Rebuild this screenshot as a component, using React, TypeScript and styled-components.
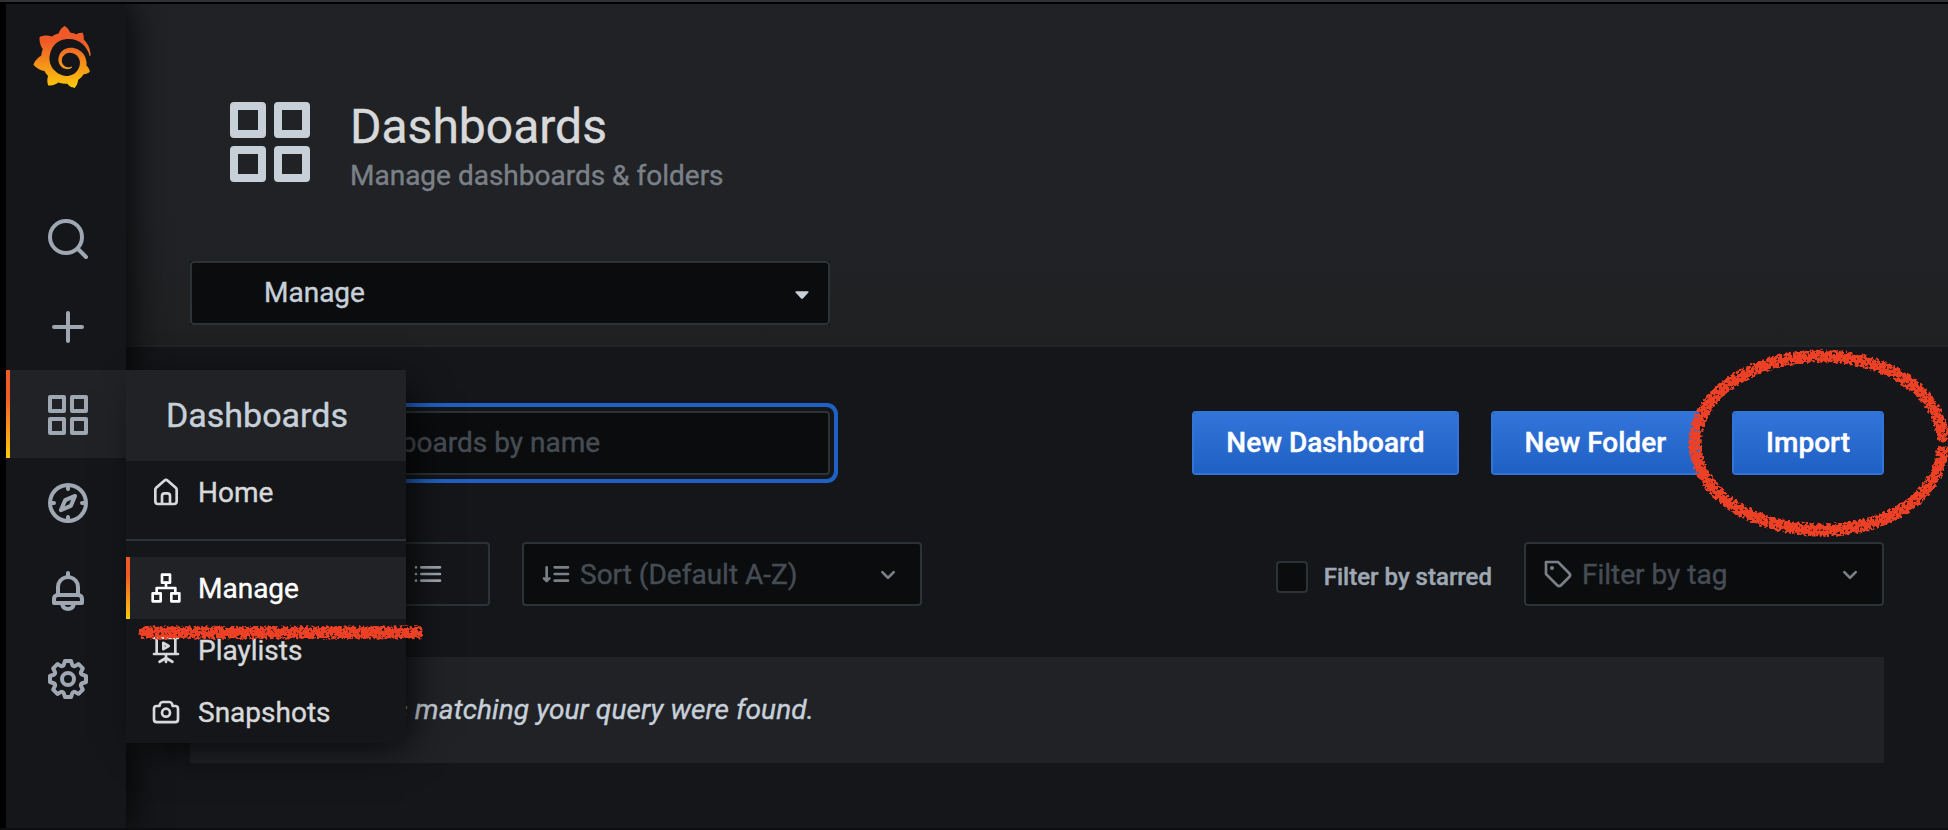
import React from "react";
import styled, { createGlobalStyle, css } from "styled-components";
import { SiGrafana } from "react-icons/si";

const c = {
  bg: "#141619",
  panel: "#202226",
  input: "#0b0c0e",
  border: "#2c3235",
  text: "#c7d0d9",
  strong: "#d8d9da",
  weak: "#7b8087",
  icon: "#9fa7b3",
  placeholder: "#464c54",
  blue: "#3274d9",
  blueDark: "#1f60c4",
  marker: "#ee4024",
};
const brand = "linear-gradient(#f05a28 30%, #fbca0a 99%)";

const Global = createGlobalStyle`
  *, *::before, *::after { box-sizing: border-box; }
  body {
    margin: 0;
    background: #000;
    color: ${c.text};
    font: 400 28px/42px Roboto, "Liberation Sans", sans-serif;
    -webkit-text-stroke: 0.4px currentColor;
    overflow: hidden;
  }
  h1, p { margin: 0; font-weight: 400; }
`;

/* ---------- icons ---------- */

const Glyph = styled.svg<{ $size: number }>`
  display: block;
  flex: none;
  width: ${(p) => p.$size}px;
  height: ${(p) => p.$size}px;
  fill: currentColor;
  g {
    fill: none;
    stroke: currentColor;
    stroke-width: 2;
    stroke-linecap: round;
    stroke-linejoin: round;
  }
`;

const shapes = {
  search: (
    <g>
      <circle cx="11" cy="11" r="8" />
      <path d="M17 17l4 4" />
    </g>
  ),
  plus: (
    <g>
      <path d="M12 5v14M5 12h14" />
    </g>
  ),
  apps: (
    <g>
      <rect x="3" y="3" width="7" height="7" />
      <rect x="14" y="3" width="7" height="7" />
      <rect x="3" y="14" width="7" height="7" />
      <rect x="14" y="14" width="7" height="7" />
    </g>
  ),
  compass: (
    <path d="M12,2A10,10,0,1,0,22,12,10,10,0,0,0,12,2Zm1,17.93V19a1,1,0,0,0-2,0v.93A8,8,0,0,1,4.07,13H5a1,1,0,0,0,0-2H4.07A8,8,0,0,1,11,4.07V5a1,1,0,0,0,2,0V4.07A8,8,0,0,1,19.93,11H19a1,1,0,0,0,0,2h.93A8,8,0,0,1,13,19.93ZM15.14,7.55l-5,2.12a1,1,0,0,0-.52.52l-2.12,5a1,1,0,0,0,.21,1.1,1,1,0,0,0,.7.29.93.93,0,0,0,.4-.08l5-2.12a1,1,0,0,0,.52-.52l2.12-5a1,1,0,0,0-1.31-1.31Zm-2.49,5.1-2.28,1,1-2.28,2.28-1Z" />
  ),
  bell: (
    <path d="M18,13.18V10a6,6,0,0,0-5-5.91V3a1,1,0,0,0-2,0V4.09A6,6,0,0,0,6,10v3.18A3,3,0,0,0,4,16v2a1,1,0,0,0,1,1H8.14a4,4,0,0,0,7.72,0H19a1,1,0,0,0,1-1V16A3,3,0,0,0,18,13.18ZM8,10a4,4,0,0,1,8,0v3H8Zm4,10a2,2,0,0,1-1.72-1h3.44A2,2,0,0,1,12,20Zm6-3H6V16a1,1,0,0,1,1-1H17a1,1,0,0,1,1,1Z" />
  ),
  cog: (
    <path d="M21.32,9.55l-1.89-.63.89-1.78A1,1,0,0,0,20.13,6L18,3.87a1,1,0,0,0-1.15-.19l-1.78.89-.63-1.89A1,1,0,0,0,13.5,2h-3a1,1,0,0,0-.95.68L8.92,4.57,7.14,3.68A1,1,0,0,0,6,3.87L3.87,6a1,1,0,0,0-.19,1.15l.89,1.78-1.89.63A1,1,0,0,0,2,10.5v3a1,1,0,0,0,.68.95l1.89.63-.89,1.78A1,1,0,0,0,3.87,18L6,20.13a1,1,0,0,0,1.15.19l1.78-.89.63,1.89a1,1,0,0,0,.95.68h3a1,1,0,0,0,.95-.68l.63-1.89,1.78.89A1,1,0,0,0,18,20.13L20.13,18a1,1,0,0,0,.19-1.15l-.89-1.78,1.89-.63A1,1,0,0,0,22,13.5v-3A1,1,0,0,0,21.32,9.55ZM20,12.78l-1.2.4A2,2,0,0,0,17.64,16l.57,1.14-1.1,1.1L16,17.64a2,2,0,0,0-2.79,1.16l-.4,1.2H11.22l-.4-1.2A2,2,0,0,0,8,17.64l-1.14.57-1.1-1.1L6.36,16A2,2,0,0,0,5.2,13.18L4,12.78V11.22l1.2-.4A2,2,0,0,0,6.36,8L5.79,6.89l1.1-1.1L8,6.36A2,2,0,0,0,10.82,5.2l.4-1.2h1.56l.4,1.2A2,2,0,0,0,16,6.36l1.14-.57,1.1,1.1L17.64,8a2,2,0,0,0,1.16,2.79l1.2.4ZM12,8a4,4,0,1,0,4,4A4,4,0,0,0,12,8Zm0,6a2,2,0,1,1,2-2A2,2,0,0,1,12,14Z" />
  ),
  home: (
    <path d="M20,8h0L14,2.74a3,3,0,0,0-4,0L4,8a3,3,0,0,0-1,2.26V19a3,3,0,0,0,3,3H18a3,3,0,0,0,3-3V10.25A3,3,0,0,0,20,8ZM14,20H10V15a1,1,0,0,1,1-1h2a1,1,0,0,1,1,1Zm5-1a1,1,0,0,1-1,1H16V15a3,3,0,0,0-3-3H11a3,3,0,0,0-3,3v5H6a1,1,0,0,1-1-1V10.25a1,1,0,0,1,.34-.75l6-5.25a1,1,0,0,1,1.32,0l6,5.25a1,1,0,0,1,.34.75Z" />
  ),
  sitemap: (
    <g>
      <rect x="9" y="2" width="6" height="6" />
      <rect x="2" y="16" width="6" height="6" />
      <rect x="16" y="16" width="6" height="6" />
      <path d="M12 8v4M5 16v-4h14v4" />
    </g>
  ),
  presentation: (
    <g>
      <path d="M3 3h18M5 3v12M19 3v12M3 15h18M12 15v6M12 18l-4.8 2.8M12 18l4.8 2.8" />
      <path d="M10 6.6v4.8L14 9z" />
    </g>
  ),
  camera: (
    <path d="M19,6.5H17.72l-.32-1a3,3,0,0,0-2.84-2H9.44A3,3,0,0,0,6.6,5.55l-.32,1H5a3,3,0,0,0-3,3v8a3,3,0,0,0,3,3H19a3,3,0,0,0,3-3v-8A3,3,0,0,0,19,6.5Zm1,11a1,1,0,0,1-1,1H5a1,1,0,0,1-1-1v-8a1,1,0,0,1,1-1H7a1,1,0,0,0,1-.68l.54-1.64a1,1,0,0,1,.95-.68h5.12a1,1,0,0,1,.95.68l.54,1.64A1,1,0,0,0,17,8.5h2a1,1,0,0,1,1,1Zm-8-9a4,4,0,1,0,4,4A4,4,0,0,0,12,8.5Zm0,6a2,2,0,1,1,2-2A2,2,0,0,1,12,14.5Z" />
  ),
  list: (
    <g>
      <path d="M3 7h.01M3 12h.01M3 17h.01M7 7h14M7 12h14M7 17h14" />
    </g>
  ),
  sort: (
    <g>
      <path d="M5 7v10M3 15.3l2 1.9 2-1.9M11 7h10M11 12h10M11 17h10" />
    </g>
  ),
  tag: (
    <path d="M7.5,6A1.5,1.5,0,1,0,9,7.5,1.5,1.5,0,0,0,7.5,6Zm13.62,4.71L12.71,2.29A1,1,0,0,0,12,2H3A1,1,0,0,0,2,3v9a1,1,0,0,0,.29.71l8.42,8.41a3,3,0,0,0,4.24,0L21.12,15a3,3,0,0,0,0-4.24Zm-1.41,2.82h0l-6.18,6.17a1,1,0,0,1-1.41,0L4,11.59V4h7.59l8.12,8.12a1,1,0,0,1,.29.71A1,1,0,0,1,19.71,13.53Z" />
  ),
  angleDown: (
    <path d="M17,9.17a1,1,0,0,0-1.41,0L12,12.71,8.46,9.17a1,1,0,0,0-1.41,0,1,1,0,0,0,0,1.42l4.24,4.24a1,1,0,0,0,1.42,0L17,10.59A1,1,0,0,0,17,9.17Z" />
  ),
  caret: <path d="M7.6 10.7h8.8c.6 0 .8.6.4 1l-4.1 4.4c-.4.4-1 .4-1.4 0l-4.1-4.4c-.4-.4-.2-1 .4-1z" />,
};

type IconName = keyof typeof shapes;

const Icon = ({ name, size = 32 }: { name: IconName; size?: number }) => (
  <Glyph $size={size} viewBox="0 0 24 24" aria-hidden="true">
    {shapes[name]}
  </Glyph>
);

/* ---------- shell ---------- */

const Window = styled.div`
  position: relative;
  display: flex;
  flex-direction: column;
  width: 1948px;
  height: 830px;
  overflow: hidden;
  border-top: 2px solid #313235;
  border-bottom: 2px solid #0c0d0f;
  background: #000;
`;

const Body = styled.div`
  display: flex;
  flex: 1;
  padding: 2px 0 0 6px;
`;

const Sidebar = styled.nav`
  position: relative;
  z-index: 2;
  display: flex;
  flex-direction: column;
  flex: none;
  width: 120px;
  background: ${c.bg};
  box-shadow: 0 0 40px #000;
`;

const Brand = styled.a`
  display: flex;
  height: 190px;
  padding: 22px 0 0 25px;
`;

const Logo = styled(SiGrafana)`
  width: 62px;
  height: 62px;
`;

const NavItem = styled.div<{ $active?: boolean }>`
  position: relative;
  display: flex;
  align-items: center;
  justify-content: center;
  height: 88px;
  padding: 2px 0 0 4px;
  color: ${c.icon};
  ${(p) =>
    p.$active &&
    css`
      background: ${brand} left / 4px 100% no-repeat, ${c.panel};
    `}
`;

const Flyout = styled.div`
  position: absolute;
  top: 0;
  left: 120px;
  width: 280px;
  background: ${c.bg};
  box-shadow: 10px 10px 40px -10px #000;
`;

const FlyoutTitle = styled.div`
  height: 91px;
  padding-left: 40px;
  background: ${c.panel};
  color: ${c.text};
  font-size: 34px;
  line-height: 91px;
`;

const FlyoutRow = styled.a<{ $active?: boolean }>`
  display: flex;
  align-items: center;
  gap: 16px;
  height: 62px;
  padding-left: 24px;
  color: ${c.strong};
  ${(p) =>
    p.$active &&
    css`
      background: ${brand} left / 4px 100% no-repeat, ${c.panel};
      color: #fff;
    `}
`;

const FlyoutLabel = styled.span`
  padding-top: 2px;
`;

const Divider = styled.div`
  height: 2px;
  margin: 16px 0;
  background: ${c.border};
`;

/* ---------- main column ---------- */

const Main = styled.main`
  flex: 1;
  min-width: 0;
  background: ${c.bg};
`;

const PageHeader = styled.header`
  height: 343px;
  padding: 90px 64px 0;
  border-bottom: 2px solid #222427;
  background: linear-gradient(#202226 60%, #1f2021);
`;

const TitleRow = styled.div`
  display: flex;
  height: 167px;
  padding-left: 32px;
  color: ${c.text};
`;

const TitleText = styled.div`
  padding: 5px 0 0 32px;
`;

const Title = styled.h1`
  color: ${c.strong};
  font-size: 48px;
  line-height: 56px;
`;

const Subtitle = styled.p`
  color: ${c.weak};
`;

const boxed = css`
  display: flex;
  align-items: center;
  height: 64px;
  border: 2px solid ${c.border};
  border-radius: 4px;
`;

const PageSelectFrame = styled.div`
  width: 640px;
  background: ${c.input};
`;

const PageSelect = styled.div`
  ${boxed}
  justify-content: space-between;
  padding: 0 10px 0 72px;
  background: ${c.input};
`;

const Content = styled.section`
  padding: 64px 64px 0;
`;

const ActionRow = styled.div`
  display: flex;
  gap: 32px;
`;

const SearchInput = styled.div`
  ${boxed}
  width: 640px;
  margin-right: auto;
  padding-left: 14px;
  gap: 9px;
  background: ${c.input};
  color: ${c.placeholder};
  box-shadow: 0 0 0 4px ${c.bg}, 0 0 0 8px ${c.blueDark};
`;

const Button = styled.button`
  height: 64px;
  padding: 0 32px;
  border: 2px solid ${c.blue};
  border-radius: 4px;
  background: linear-gradient(${c.blue}, ${c.blueDark}) padding-box;
  color: #fff;
  font: 500 28px/56px Roboto, "Liberation Sans", sans-serif;
  letter-spacing: 0.01px;
  white-space: nowrap;
`;

const FilterRow = styled.div`
  display: flex;
  gap: 32px;
  margin-top: 67px;
`;

const LayoutToggle = styled.div`
  ${boxed}
  width: 300px;
  justify-content: flex-end;
  padding-right: 44px;
  color: ${c.icon};
`;

const Select = styled.div<{ $width: number }>`
  ${boxed}
  width: ${(p) => p.$width}px;
  padding: 0 16px;
  gap: 8px;
  background: ${c.input};
  color: ${c.weak};
`;

const Placeholder = styled.span`
  flex: 1;
  padding-top: 2px;
  color: ${c.placeholder};
`;

const Chevron = styled.span`
  padding-top: 2px;
`;

const StarFilter = styled.label`
  display: flex;
  align-items: center;
  gap: 16px;
  margin-left: auto;
  padding-top: 6px;
  color: ${c.icon};
  font-size: 24px;
  font-weight: 500;
`;

const Checkbox = styled.span`
  width: 32px;
  height: 32px;
  border: 2px solid ${c.border};
  border-radius: 4px;
  background: ${c.input};
`;

const EmptyResult = styled.div`
  height: 106px;
  margin-top: 51px;
  padding-left: 32px;
  background: ${c.panel};
  font-style: italic;
  line-height: 106px;
  letter-spacing: 0.1px;
`;

/* ---------- marker annotations ---------- */

const Annotations = styled.svg`
  position: absolute;
  z-index: 3;
  top: -2px;
  left: 0;
  width: 1948px;
  height: 830px;
  pointer-events: none;
  fill: none;
  stroke: ${c.marker};
`;

const Crayon = () => (
  <Annotations viewBox="0 0 1948 830" aria-hidden="true">
    <defs>
      <filter id="crayon" filterUnits="userSpaceOnUse" x="0" y="0" width="1948" height="830" colorInterpolationFilters="sRGB">
        <feGaussianBlur in="SourceAlpha" stdDeviation="2.4" result="soft" />
        <feTurbulence type="fractalNoise" baseFrequency="0.34" numOctaves="3" seed="4" />
        <feColorMatrix values="0 0 0 0 0  0 0 0 0 0  0 0 0 0 0  0 0 0 2.6 -0.8" result="noise" />
        <feComposite in="soft" in2="noise" operator="arithmetic" k1="6" k2="3.2" k3="0" k4="-2.8" result="grain" />
        <feFlood floodColor={c.marker} />
        <feComposite in2="grain" operator="in" />
      </filter>
    </defs>
    <g filter="url(#crayon)" strokeWidth="12.5">
      <path d="M139 632.5H423" />
      <path d="M1943 441C1941 391 1886 356 1820 356S1695 394 1695 443 1752 530 1822 530 1941 493 1943 446" />
    </g>
  </Annotations>
);

const App = () => (
  <>
    <Global />
    <Window>
      <Body>
        <Sidebar>
          <Brand>
            <svg width="0" height="0" aria-hidden="true">
              <defs>
                <linearGradient id="flame" x1="0" y1="0" x2="0" y2="1">
                  <stop offset="0.25" stopColor="#f05a28" />
                  <stop offset="1" stopColor="#fbca0a" />
                </linearGradient>
              </defs>
            </svg>
            <Logo fill="url(#flame)" />
          </Brand>
          <NavItem>
            <Icon name="search" size={48} />
          </NavItem>
          <NavItem>
            <Icon name="plus" size={48} />
          </NavItem>
          <NavItem $active>
            <Icon name="apps" size={48} />
            <Flyout>
              <FlyoutTitle>Dashboards</FlyoutTitle>
              <FlyoutRow>
                <Icon name="home" />
                <FlyoutLabel>Home</FlyoutLabel>
              </FlyoutRow>
              <Divider />
              <FlyoutRow $active>
                <Icon name="sitemap" />
                <FlyoutLabel>Manage</FlyoutLabel>
              </FlyoutRow>
              <FlyoutRow>
                <Icon name="presentation" />
                <FlyoutLabel>Playlists</FlyoutLabel>
              </FlyoutRow>
              <FlyoutRow>
                <Icon name="camera" />
                <FlyoutLabel>Snapshots</FlyoutLabel>
              </FlyoutRow>
            </Flyout>
          </NavItem>
          <NavItem>
            <Icon name="compass" size={48} />
          </NavItem>
          <NavItem>
            <Icon name="bell" size={48} />
          </NavItem>
          <NavItem>
            <Icon name="cog" size={48} />
          </NavItem>
        </Sidebar>
        <Main>
          <PageHeader>
            <TitleRow>
              <Icon name="apps" size={96} />
              <TitleText>
                <Title>Dashboards</Title>
                <Subtitle>Manage dashboards &amp; folders</Subtitle>
              </TitleText>
            </TitleRow>
            <PageSelectFrame>
              <PageSelect>
                Manage
                <Icon name="caret" />
              </PageSelect>
            </PageSelectFrame>
          </PageHeader>
          <Content>
            <ActionRow>
              <SearchInput>
                <Icon name="search" />
                Search dashboards by name
              </SearchInput>
              <Button>New Dashboard</Button>
              <Button>New Folder</Button>
              <Button>Import</Button>
            </ActionRow>
            <FilterRow>
              <LayoutToggle>
                <Icon name="list" />
              </LayoutToggle>
              <Select $width={400}>
                <Icon name="sort" />
                <Placeholder>Sort (Default A-Z)</Placeholder>
                <Chevron>
                  <Icon name="angleDown" />
                </Chevron>
              </Select>
              <StarFilter>
                <Checkbox />
                Filter by starred
              </StarFilter>
              <Select $width={360}>
                <Icon name="tag" />
                <Placeholder>Filter by tag</Placeholder>
                <Chevron>
                  <Icon name="angleDown" />
                </Chevron>
              </Select>
            </FilterRow>
            <EmptyResult>No dashboards matching your query were found.</EmptyResult>
          </Content>
        </Main>
      </Body>
      <Crayon />
    </Window>
  </>
);

export default App;
